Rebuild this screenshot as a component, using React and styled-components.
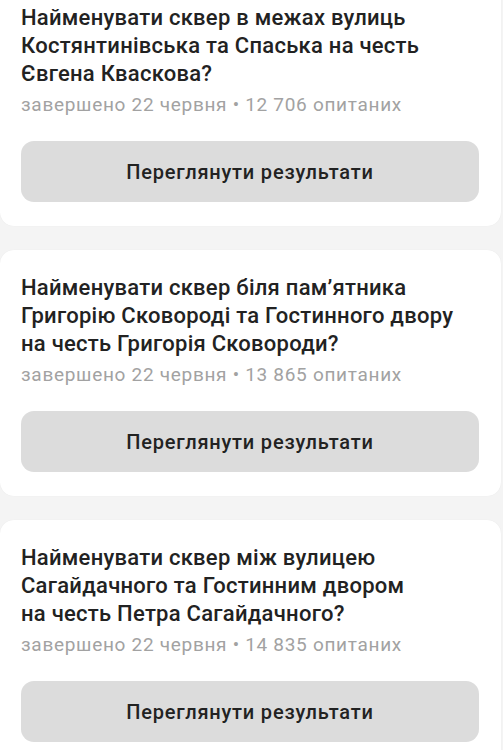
import React from "react";
import styled, { createGlobalStyle } from "styled-components";

const Global = createGlobalStyle`
  html, body { margin: 0; padding: 0; background: #f4f4f4; }
  body { font-family: Roboto, "Noto Sans", "Liberation Sans", sans-serif; -webkit-font-smoothing: antialiased; }
`;

const List = styled.div`
  display: flex;
  flex-direction: column;
  gap: 24px;
  margin-top: -20px;
  padding-right: 2px;
`;

const Card = styled.section`
  background: #ffffff;
  border-radius: 14px;
  padding: 24px 22px 24px 21px;
  box-shadow: 0 0 1px rgba(0, 0, 0, 0.08);
`;

const Title = styled.h2`
  margin: 0;
  font-size: 22px;
  line-height: 28px;
  font-weight: 500;
  letter-spacing: 0.26px;
  color: #222222;
`;

const Meta = styled.div`
  margin-top: 5px;
  font-size: 19px;
  line-height: 24px;
  letter-spacing: 0.7px;
  color: #a2a2a2;
`;

const Button = styled.button`
  display: flex;
  align-items: center;
  justify-content: center;
  width: 100%;
  height: 61px;
  margin-top: 24px;
  border: none;
  border-radius: 13px;
  background: #dcdcdc;
  font-family: inherit;
  font-size: 20px;
  font-weight: 500;
  letter-spacing: 0.8px;
  color: #222222;
`;

const polls = [
  {
    title: ["Найменувати сквер в межах вулиць", "Костянтинівська та Спаська на честь", "Євгена Кваскова?"],
    count: "12 706",
  },
  {
    title: ["Найменувати сквер біля пам’ятника", "Григорію Сковороді та Гостинного двору", "на честь Григорія Сковороди?"],
    count: "13 865",
  },
  {
    title: ["Найменувати сквер між вулицею", "Сагайдачного та Гостинним двором", "на честь Петра Сагайдачного?"],
    count: "14 835",
  },
];

export default function App() {
  return (
    <>
      <Global />
      <List>
        {polls.map((p, i) => (
          <Card key={i}>
            <Title>
              {p.title.map((l, j) => (
                <React.Fragment key={j}>
                  {l}
                  {j < p.title.length - 1 && <br />}
                </React.Fragment>
              ))}
            </Title>
            <Meta>завершено 22 червня • {p.count} опитаних</Meta>
            <Button>Переглянути результати</Button>
          </Card>
        ))}
      </List>
    </>
  );
}
